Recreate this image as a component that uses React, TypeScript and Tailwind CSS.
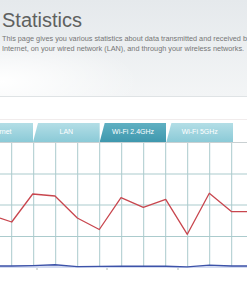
import React from "react";

const gridX = [11.7, 33.7, 55.7, 77.7, 99.7, 121.7, 143.7, 165.7, 187.7, 209.7, 231.7];
const gridY = [31, 62, 93.5];

const red: [number, number][] = [
  [0, 75], [11.7, 79], [32.7, 51], [55, 53], [77.3, 75], [99.3, 86.5], [121, 54.7],
  [143.3, 64.3], [165.7, 56.3], [187.3, 91.3], [209.3, 50.3], [231.7, 68.7], [247, 68.7],
];
const blue: [number, number][] = [
  [0, 123], [11.7, 123], [32.7, 122.6], [55, 121.8], [77.3, 123.6], [99.3, 123.4], [121, 123.2],
  [143.3, 123.2], [165.7, 123.2], [187.3, 123.9], [209.3, 122.1], [231.7, 123], [247, 123],
];
const pts = (a: [number, number][]) => a.map((p) => p.join(",")).join(" ");

function Tab({ label, active, first }: { label: string; active?: boolean; first?: boolean }) {
  return (
    <div
      className={
        "h-[19px] w-[66.7px] shrink-0 flex items-center justify-center text-[7px] text-white [clip-path:polygon(5px_0,100%_0,100%_100%,0_100%)] " +
        (active
          ? "bg-[linear-gradient(to_bottom,#5fb0c2,#3f98ae)]"
          : "bg-[linear-gradient(to_bottom,#b3dee6,#8bcad7)]") +
        (first ? " ml-[-33.7px]" : "")
      }
    >
      {label}
    </div>
  );
}

export default function App() {
  return (
    <div
      className="w-[247px] h-[296px] overflow-hidden bg-white flex flex-col"
      style={{ fontFamily: '"Liberation Sans", Arial, sans-serif' }}
    >
      <div className="h-[97px] shrink-0 border-b border-[#dfe3e5] pl-[2px] pt-[10px] bg-[image:radial-gradient(ellipse_at_0%_85%,#ffffff_0%,rgba(255,255,255,0)_40%),linear-gradient(to_bottom,#e5e9ec,#f3f5f6)]">
        <div className="text-[20px] leading-[20px] text-[#5f615f]">Statistics</div>
        <div className="mt-[4px] text-[7.3px] leading-[10px] text-[#767676] whitespace-nowrap">
          <div>This page gives you various statistics about data transmitted and received by the</div>
          <div>Internet, on your wired network (LAN), and through your wireless networks.</div>
        </div>
      </div>
      <div className="h-[23px] shrink-0 border-b border-[#f1ecec]" />
      <div className="mt-[3px] h-[20px] flex items-start border-b border-[#c9d0d2]">
        <Tab label="Internet" first />
        <Tab label="LAN" />
        <Tab label="Wi-Fi 2.4GHz" active />
        <Tab label="Wi-Fi 5GHz" />
      </div>
      <svg width="247" height="132" className="shrink-0 block">
        {gridX.map((x) => (
          <line key={x} x1={x} y1={0} x2={x} y2={125} stroke="#abcbcd" strokeWidth={1} />
        ))}
        {gridY.map((y) => (
          <line key={y} x1={0} y1={y} x2={247} y2={y} stroke="#abcbcd" strokeWidth={1} />
        ))}
        <polygon points={pts(blue) + " 247,125 0,125"} fill="#d3dbf1" />
        <polyline points={pts(blue)} fill="none" stroke="#3c52a8" strokeWidth={1.4} />
        <polyline points={pts(red)} fill="none" stroke="#c8464e" strokeWidth={1.3} strokeLinejoin="round" />
        {[37, 107, 178].map((x) => (
          <line key={x} x1={x} y1={125} x2={x} y2={127} stroke="#9aa" strokeWidth={0.8} />
        ))}
      </svg>
    </div>
  );
}
